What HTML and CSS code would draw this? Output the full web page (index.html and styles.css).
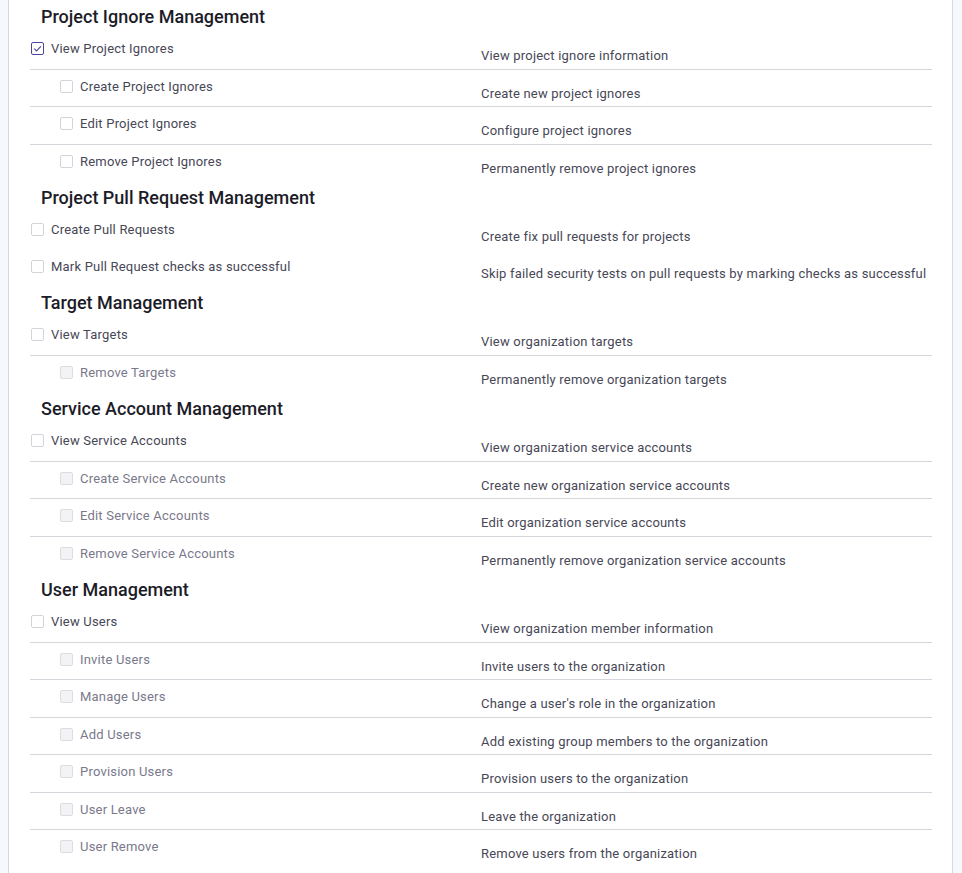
FILE: index.html
```html
<!DOCTYPE html>
<html>
<head>
<meta charset="utf-8">
<link rel="stylesheet" href="styles.css">
</head>
<body>
<div class="page">
  <div class="panel">
    <h3 class="heading">Project Ignore Management</h3>
    <div class="row sep"><div class="perm"><span class="cb checked"><svg viewBox="0 0 13 13" width="13" height="13"><path d="M3.2 6.6 L5.5 8.9 L9.9 4.3" fill="none" stroke="#4b45a1" stroke-width="1.1"/></svg></span><span class="label">View Project Ignores</span></div><div class="desc">View project ignore information</div></div>
    <div class="row sep"><div class="perm child"><span class="cb"></span><span class="label">Create Project Ignores</span></div><div class="desc">Create new project ignores</div></div>
    <div class="row sep"><div class="perm child"><span class="cb"></span><span class="label">Edit Project Ignores</span></div><div class="desc">Configure project ignores</div></div>
    <div class="row"><div class="perm child"><span class="cb"></span><span class="label">Remove Project Ignores</span></div><div class="desc">Permanently remove project ignores</div></div>

    <h3 class="heading">Project Pull Request Management</h3>
    <div class="row"><div class="perm"><span class="cb"></span><span class="label">Create Pull Requests</span></div><div class="desc">Create fix pull requests for projects</div></div>
    <div class="row"><div class="perm"><span class="cb"></span><span class="label">Mark Pull Request checks as successful</span></div><div class="desc">Skip failed security tests on pull requests by marking checks as successful</div></div>

    <h3 class="heading">Target Management</h3>
    <div class="row sep"><div class="perm"><span class="cb"></span><span class="label">View Targets</span></div><div class="desc">View organization targets</div></div>
    <div class="row"><div class="perm child disabled"><span class="cb"></span><span class="label">Remove Targets</span></div><div class="desc">Permanently remove organization targets</div></div>

    <h3 class="heading">Service Account Management</h3>
    <div class="row sep"><div class="perm"><span class="cb"></span><span class="label">View Service Accounts</span></div><div class="desc">View organization service accounts</div></div>
    <div class="row sep"><div class="perm child disabled"><span class="cb"></span><span class="label">Create Service Accounts</span></div><div class="desc">Create new organization service accounts</div></div>
    <div class="row sep"><div class="perm child disabled"><span class="cb"></span><span class="label">Edit Service Accounts</span></div><div class="desc">Edit organization service accounts</div></div>
    <div class="row"><div class="perm child disabled"><span class="cb"></span><span class="label">Remove Service Accounts</span></div><div class="desc">Permanently remove organization service accounts</div></div>

    <h3 class="heading">User Management</h3>
    <div class="row sep"><div class="perm"><span class="cb"></span><span class="label">View Users</span></div><div class="desc">View organization member information</div></div>
    <div class="row sep"><div class="perm child disabled"><span class="cb"></span><span class="label">Invite Users</span></div><div class="desc">Invite users to the organization</div></div>
    <div class="row sep"><div class="perm child disabled"><span class="cb"></span><span class="label">Manage Users</span></div><div class="desc">Change a user's role in the organization</div></div>
    <div class="row sep"><div class="perm child disabled"><span class="cb"></span><span class="label">Add Users</span></div><div class="desc">Add existing group members to the organization</div></div>
    <div class="row sep"><div class="perm child disabled"><span class="cb"></span><span class="label">Provision Users</span></div><div class="desc">Provision users to the organization</div></div>
    <div class="row sep"><div class="perm child disabled"><span class="cb"></span><span class="label">User Leave</span></div><div class="desc">Leave the organization</div></div>
    <div class="row"><div class="perm child disabled"><span class="cb"></span><span class="label">User Remove</span></div><div class="desc">Remove users from the organization</div></div>
  </div>
</div>
</body>
</html>
```
FILE: styles.css
```css
html, body {
  margin: 0;
  padding: 0;
  background: #f5f8fc;
  font-family: Roboto, "Liberation Sans", sans-serif;
}
.page {
  padding: 0 9px 0 8px;
}
.panel {
  background: #ffffff;
  border-left: 1px solid #d5d8de;
  border-right: 1px solid #d5d8de;
  padding: 0 20px 40px 21px;
}
.heading {
  margin: 0;
  height: 27px;
  padding: 5px 0 0 11px;
  font-size: 18px;
  line-height: 24px;
  font-weight: 500;
  color: #1c1c28;
}
.row {
  display: grid;
  grid-template-columns: 1fr 1fr;
  height: 36.5px;
  box-sizing: content-box;
}
.row.sep {
  border-bottom: 1px solid #d6d6dc;
}
.perm {
  display: flex;
  align-items: flex-start;
  padding: 9px 0 0 1px;
  gap: 7px;
}
.perm.child {
  padding-left: 30px;
}
.cb {
  width: 13px;
  height: 13px;
  box-sizing: border-box;
  border: 1px solid #d3d3db;
  border-radius: 2px;
  background: #fff;
  margin-top: 1px;
  flex: none;
  position: relative;
}
.cb svg {
  position: absolute;
  left: -1px;
  top: -1px;
}
.cb.checked {
  border-color: #4b45a1;
}
.label {
  font-size: 13px;
  line-height: 15px;
  letter-spacing: 0.2px;
  color: #474756;
}
.disabled .cb {
  background: #f3f3f6;
  border-color: #dcdce3;
}
.disabled .label {
  color: #7a798b;
}
.desc {
  padding-top: 16px;
  font-size: 13px;
  line-height: 15px;
  letter-spacing: 0.2px;
  color: #474756;
}
```
